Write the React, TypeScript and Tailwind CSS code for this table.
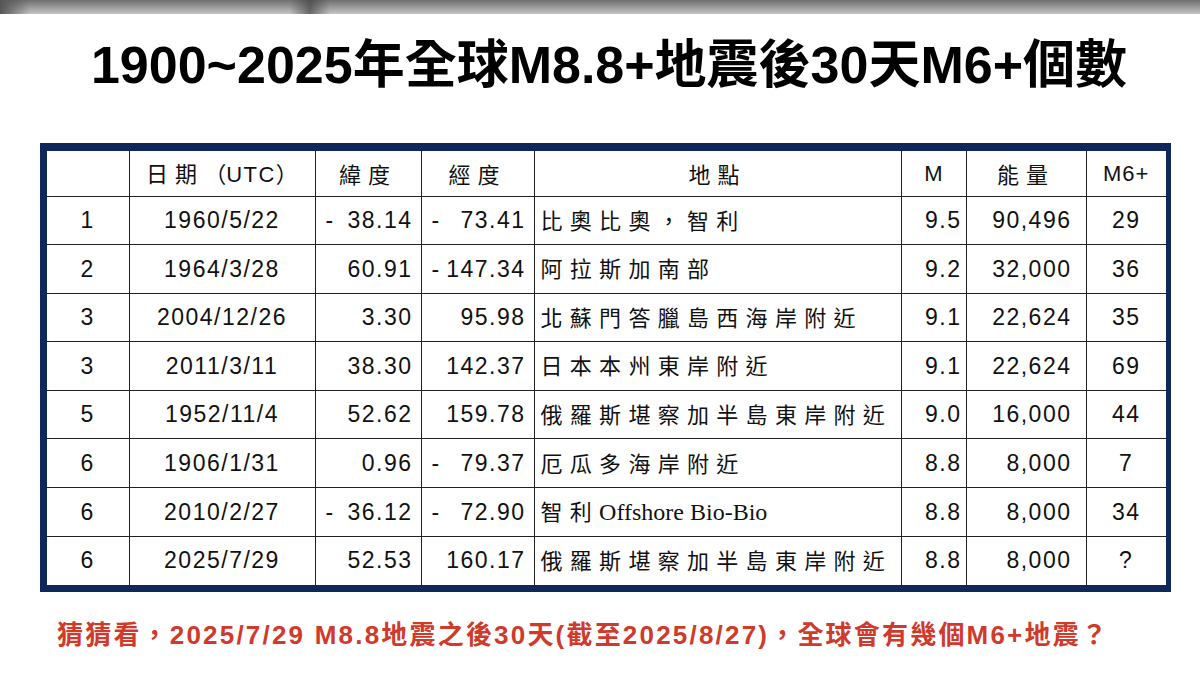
const rows = [
  { no: "1", date: "1960/5/22", lat: "38.14", latNeg: true, lon: "73.41", lonNeg: true, place: "比奧比奧，智利", m: "9.5", energy: "90,496", n: "29" },
  { no: "2", date: "1964/3/28", lat: "60.91", latNeg: false, lon: "147.34", lonNeg: true, place: "阿拉斯加南部", m: "9.2", energy: "32,000", n: "36" },
  { no: "3", date: "2004/12/26", lat: "3.30", latNeg: false, lon: "95.98", lonNeg: false, place: "北蘇門答臘島西海岸附近", m: "9.1", energy: "22,624", n: "35" },
  { no: "3", date: "2011/3/11", lat: "38.30", latNeg: false, lon: "142.37", lonNeg: false, place: "日本本州東岸附近", m: "9.1", energy: "22,624", n: "69" },
  { no: "5", date: "1952/11/4", lat: "52.62", latNeg: false, lon: "159.78", lonNeg: false, place: "俄羅斯堪察加半島東岸附近", m: "9.0", energy: "16,000", n: "44" },
  { no: "6", date: "1906/1/31", lat: "0.96", latNeg: false, lon: "79.37", lonNeg: true, place: "厄瓜多海岸附近", m: "8.8", energy: "8,000", n: "7" },
  { no: "6", date: "2010/2/27", lat: "36.12", latNeg: true, lon: "72.90", lonNeg: true, place: "智利", extra: "Offshore Bio-Bio", m: "8.8", energy: "8,000", n: "34" },
  { no: "6", date: "2025/7/29", lat: "52.53", latNeg: false, lon: "160.17", lonNeg: false, place: "俄羅斯堪察加半島東岸附近", m: "8.8", energy: "8,000", n: "?" },
];

// Latin first so digits use Arial metrics, CJK falls through to Noto
const mixed = "font-['Liberation_Sans','Noto_Sans_CJK_TC',sans-serif]";
const cjk = "font-['Noto_Sans_CJK_TC','Noto_Sans_CJK_SC',sans-serif]";
const num = "font-['Liberation_Sans',Arial,sans-serif] text-[23px] tracking-[1.5px] text-[#111]";
const cell = "border border-[#222] p-0";

function Coord({ v, neg }: { v: string; neg: boolean }) {
  return (
    <div className="flex justify-between items-center pl-[10px] pr-[8px]">
      <span>{neg ? "-" : ""}</span>
      <span>{v}</span>
    </div>
  );
}

export default function App() {
  return (
    <div className="w-[1200px] h-[675px] bg-white overflow-hidden relative">
      {/* grey strip at the top of the slide */}
      <div className="h-[14px] bg-gradient-to-b from-[#707070] to-[#c4c4c4] relative">
        <div className="absolute left-0 top-0 h-full w-[30px] bg-gradient-to-r from-[#555] to-transparent" />
        <div className="absolute left-[290px] top-0 h-full w-[40px] bg-gradient-to-r from-transparent via-[#444] to-transparent opacity-70" />
      </div>

      <h1 className={`text-center text-black font-bold text-[52px] leading-none mt-[25px] pl-[18px] ${mixed}`}>
        1900~2025年全球M8.8+地震後30天M6+個數
      </h1>

      <div className="mt-[52px] ml-[40px] w-[1131px] border-[7px] border-t-[8px] border-r-[5px] border-[#10275a] bg-white">
        <table className="w-full border-collapse table-fixed">
          <colgroup>
            <col className="w-[82px]" />
            <col className="w-[186px]" />
            <col className="w-[106px]" />
            <col className="w-[113px]" />
            <col className="w-[367px]" />
            <col className="w-[65px]" />
            <col className="w-[120px]" />
            <col className="w-[80px]" />
          </colgroup>
          <thead>
            <tr className="h-[45px] text-[22px] text-[#111]">
              <th className={`${cell} border-t-0 border-l-0`} />
              <th className={`${cell} border-t-0 font-normal ${cjk} tracking-[7px]`}>
                日期<span className="tracking-normal">（</span><span className="font-['Liberation_Sans'] tracking-[1.5px]">UTC</span><span className="tracking-normal">）</span>
              </th>
              <th className={`${cell} border-t-0 font-normal ${cjk} tracking-[7px]`}>緯度</th>
              <th className={`${cell} border-t-0 font-normal ${cjk} tracking-[7px]`}>經度</th>
              <th className={`${cell} border-t-0 font-normal ${cjk} tracking-[7px]`}>地點</th>
              <th className={`${cell} border-t-0 font-normal font-['Liberation_Sans']`}>M</th>
              <th className={`${cell} border-t-0 font-normal ${cjk} tracking-[7px]`}>能量</th>
              <th className={`${cell} border-t-0 border-r-0 font-normal font-['Liberation_Sans'] tracking-[1px]`}>M6+</th>
            </tr>
          </thead>
          <tbody>
            {rows.map((r, i) => {
              const last = i === rows.length - 1 ? "border-b-0" : "";
              return (
                <tr key={i} className={`h-[48.6px] ${num}`}>
                  <td className={`${cell} border-l-0 text-center ${last}`}>{r.no}</td>
                  <td className={`${cell} text-center ${last}`}>{r.date}</td>
                  <td className={`${cell} ${last}`}><Coord v={r.lat} neg={r.latNeg} /></td>
                  <td className={`${cell} ${last}`}><Coord v={r.lon} neg={r.lonNeg} /></td>
                  <td className={`${cell} pl-[6px] ${last}`}>
                    <span className={`${cjk} text-[22px] tracking-[7.3px]`}>{r.place}</span>
                    {r.extra && <span className="font-['Liberation_Serif',serif] text-[24px] tracking-normal">{r.extra}</span>}
                  </td>
                  <td className={`${cell} text-right pr-[4px] ${last}`}>{r.m}</td>
                  <td className={`${cell} text-right pr-[14px] ${last}`}>{r.energy}</td>
                  <td className={`${cell} border-r-0 text-center ${last}`}>{r.n}</td>
                </tr>
              );
            })}
          </tbody>
        </table>
      </div>

      <p className={`mt-[30px] ml-[57px] text-[#cf3a2c] font-bold text-[26px] tracking-[2.2px] leading-none ${mixed}`}>
        猜猜看，2025/7/29 M8.8地震之後30天(截至2025/8/27)，全球會有幾個M6+地震？
      </p>
    </div>
  );
}
